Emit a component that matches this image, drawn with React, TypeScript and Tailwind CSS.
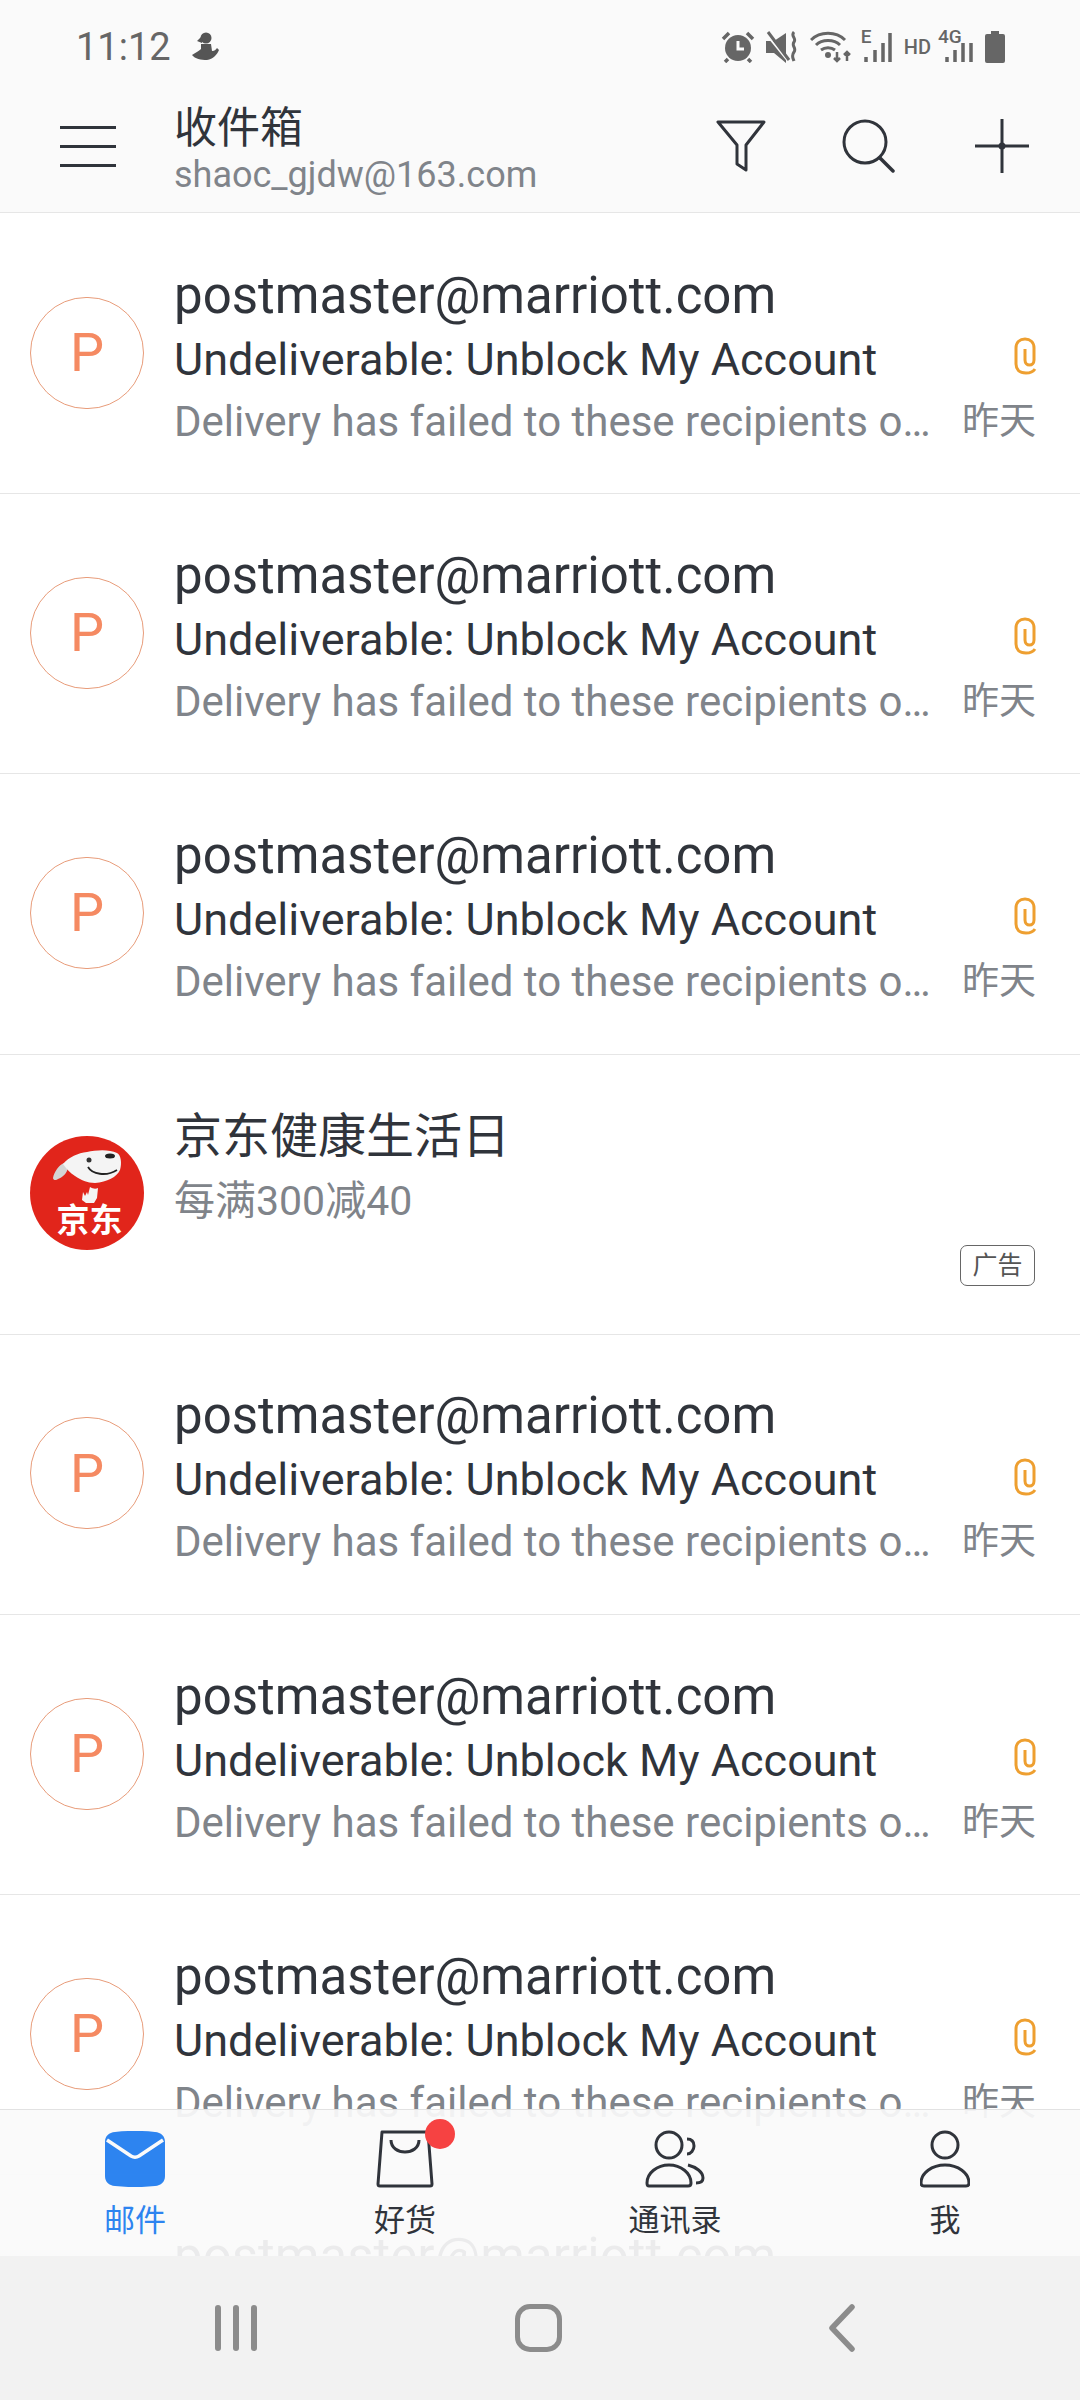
import React from 'react';

const FONT = "font-[Roboto,'Noto_Sans_CJK_SC',sans-serif]";

function StatusIcons() {
  return (
    <div className="flex items-center text-[#666666]">
      <svg width="34" height="32" viewBox="0 0 34 32">
        <circle cx="17" cy="17" r="13" fill="#666666" />
        <path d="M17 10v8h6" fill="none" stroke="#fafafa" strokeWidth="3" />
        <path d="M2 8l6-6M32 8l-6-6M7 28l-3 3M27 28l3 3" stroke="#666666" strokeWidth="3.500" fill="none" />
      </svg>
      <svg width="32" height="32" viewBox="0 0 32 32" className="ml-[11px]">
        <path d="M0 10h8l12-8v30L8 22H0z" fill="#666666" />
        <path d="M0 3l22 27" stroke="#fafafa" strokeWidth="2" />
        <path d="M2 1l21 28" stroke="#666666" strokeWidth="3" />
        <path d="M28 1c-4 4 3 6 0 10s3 6 0 10-1 6 0 9" fill="none" stroke="#666666" strokeWidth="3" />
      </svg>
      <svg width="42" height="32" viewBox="0 0 42 32" className="ml-[12px]">
        <path d="M1 9c9-9 25-9 34 0M6 14c6-6 18-6 24 0M11 19c4-3 10-3 14 0" fill="none" stroke="#666666" strokeWidth="3" />
        <circle cx="18" cy="24" r="3" fill="#666666" />
        <path d="M27 21v9M24 27l3 3 3-3M37 30v-9M34 24l3-3 3 3" fill="none" stroke="#666666" strokeWidth="2.500" />
      </svg>
      <div className="relative ml-[9px] h-[32px] w-[32px]">
        <span className="absolute left-0 top-[-3px] text-[19px] font-medium leading-[18px]">E</span>
        <svg width="32" height="32" viewBox="0 0 32 32" className="absolute inset-0">
          <path d="M5 26v5M14 19v12M22 12v19M29 2v29" stroke="#666666" strokeWidth="3.500" fill="none" />
        </svg>
      </div>
      <span className="ml-[11px] text-[20px] font-medium leading-none">HD</span>
      <div className="relative ml-[7px] h-[32px] w-[36px]">
        <span className="absolute left-0 top-[-3px] text-[19px] font-medium leading-[18px]">4G</span>
        <svg width="36" height="32" viewBox="0 0 36 32" className="absolute inset-0">
          <path d="M9 26v5M17 19v12M25 12v19M33 12v19" stroke="#666666" strokeWidth="3.500" fill="none" />
        </svg>
      </div>
      <svg width="20" height="32" viewBox="0 0 20 32" className="ml-[11px]">
        <path d="M6 0h8v3h4a2 2 0 0 1 2 2v25a2 2 0 0 1-2 2H2a2 2 0 0 1-2-2V5a2 2 0 0 1 2-2h4z" fill="#666666" />
      </svg>
    </div>
  );
}

function Header() {
  return (
    <div className="shrink-0 border-b border-[#e6e6e6] bg-[#fafafa]">
      <div className="flex h-[94px] items-center justify-between pl-[76px] pr-[75px]">
        <div className="flex items-center">
          <span className="text-[38px] leading-none text-[#666666]">11:12</span>
          <svg width="28" height="30" viewBox="0 0 28 30" className="ml-[20px]">
            <circle cx="15" cy="6" r="5.500" fill="#555555" />
            <path d="M12 3L6 9l5 2zM10 12h10l1 7c3 0 4-2 5-3l2 2c-2 5-6 9-12 10-6 0-12-1-15-5 3-2 7-4 9-6z" fill="#555555" />
          </svg>
        </div>
        <StatusIcons />
      </div>
      <div className="flex h-[118px] items-center pb-[14px] pl-[60px] pr-[51px]">
        <div className="flex w-[56px] flex-col gap-[16px]">
          <div className="h-[3px] bg-[#30343b]" />
          <div className="h-[3px] bg-[#30343b]" />
          <div className="h-[3px] bg-[#30343b]" />
        </div>
        <div className="ml-[58px] flex-1 pt-[7px]">
          <div className="text-[43px] leading-[50px] text-[#30343b]">收件箱</div>
          <div className="mt-[1px] text-[36px] leading-[42px] text-[#80848a]">shaoc_gjdw@163.com</div>
        </div>
        <svg width="50" height="52" viewBox="0 0 50 52">
          <path d="M2 2h46L30 25v25l-9-6V25z" fill="none" stroke="#30343b" strokeWidth="3" strokeLinejoin="round" />
        </svg>
        <svg width="54" height="54" viewBox="0 0 54 54" className="ml-[76px]">
          <circle cx="23" cy="23" r="21" fill="none" stroke="#30343b" strokeWidth="3" />
          <path d="M38 39l13 13" stroke="#30343b" strokeWidth="3.500" strokeLinecap="round" />
        </svg>
        <svg width="54" height="54" viewBox="0 0 54 54" className="ml-[79px]">
          <path d="M27 0v54M0 27h54" stroke="#30343b" strokeWidth="3" />
          <circle cx="27" cy="27" r="3.500" fill="#30343b" />
        </svg>
      </div>
    </div>
  );
}

function MailRow() {
  return (
    <div className="flex h-[280.2px] shrink-0 items-center border-b border-[#e6e6e6] bg-white pl-[30px] pr-[44px]">
      <div className="mb-[2px] flex h-[112px] w-[114px] shrink-0 items-center justify-center rounded-full border border-[#e89c7a] text-[54px] font-normal text-[#f58a62]">
        P
      </div>
      <div className="ml-[30px] min-w-0 flex-1 pt-[8px]">
        <div className="text-[51px] leading-[66px] text-[#30343b]">postmaster@marriott.com</div>
        <div className="flex items-center justify-between">
          <span className="text-[45px] leading-[62px] text-[#30343b]">Undeliverable: Unblock My Account</span>
          <svg width="24" height="38" viewBox="0 0 24 38" className="mb-[7px] mr-[-1px]">
            <path
              d="M22 32c-2 3-5 4-9 4-7 0-10-4-10-9V11c0-6 4-9 9-9s9 3 9 9v12c0 3-2 5-4.500 5S12 26 12 23V12"
              fill="none"
              stroke="#ee9f30"
              strokeWidth="3"
            />
          </svg>
        </div>
        <div className="flex items-center justify-between">
          <span className="w-[762px] truncate text-[42px] leading-[62px] text-[#80848a]">
            Delivery has failed to these recipients or groups
          </span>
          <span className="text-[37px] leading-[62px] text-[#80848a]">昨天</span>
        </div>
      </div>
    </div>
  );
}

function JdLogo() {
  return (
    <svg width="114" height="114" viewBox="0 0 114 114" className="mb-[2px] shrink-0">
      <circle cx="57" cy="57" r="57" fill="#e1251b" />
      <path d="M34 27c-5 2-10 9-11 15 0 2 3 3 5 1 5-2 9-6 10-11z" fill="#d4d4d4" />
      <path d="M33 28c6-7 15-11 24-12 9-2 22-3 30 1 4 2 5 10 3 17-3 7-13 12-25 13-8 0-14-3-20-7-5-3-9-8-12-12z" fill="#f4f4f4" />
      <circle cx="59" cy="24" r="2.500" fill="#333333" />
      <ellipse cx="80" cy="20" rx="5" ry="2.500" fill="#222222" />
      <path d="M58 31c4 7 18 10 29 3" fill="none" stroke="#222222" strokeWidth="1.800" />
      <path d="M60 51c3 2 6 2 8 1l-1 10-3 5h-8l-4-3 1-8 2 4 2-4 1 3z" fill="#f4f4f4" />
      <text x="59.500" y="96" textAnchor="middle" fontSize="33" fontWeight="700" fill="#ffffff" fontFamily="'Noto Sans CJK SC', sans-serif">
        京东
      </text>
    </svg>
  );
}

function AdRow() {
  return (
    <div className="flex h-[280.2px] shrink-0 items-center border-b border-[#e6e6e6] bg-white pl-[30px] pr-[45px]">
      <JdLogo />
      <div className="ml-[30px] flex-1 self-start pt-[50px]">
        <div className="text-[48px] leading-[64px] text-[#30343b]">京东健康生活日</div>
        <div className="mt-[1px] text-[41px] leading-[62px] text-[#80848a]">每满300减40</div>
        <div className="mt-[13px] flex justify-end">
          <span className="flex h-[41px] w-[75px] items-center justify-center rounded-[7px] border border-[#666666] text-[25px] leading-none text-[#555555]">
            广告
          </span>
        </div>
      </div>
    </div>
  );
}

function MailIcon() {
  return (
    <svg width="60" height="56" viewBox="0 0 60 56">
      <path d="M10 1c13-1.500 27-1.500 40 0 6 .500 10 4 10 10v34c0 6-4 9.500-10 10-13 1.500-27 1.500-40 0-6-.500-10-4-10-10V11C0 5 4 1.500 10 1z" fill="#2d84f0" />
      <path d="M2 9l24 16c2.500 1.500 5.500 1.500 8 0L58 9" fill="none" stroke="#fafafa" strokeWidth="3.500" />
    </svg>
  );
}

function BagIcon() {
  return (
    <svg width="58" height="58" viewBox="0 0 58 58">
      <path d="M6 2h46l4 52a2 2 0 0 1-2 2H4a2 2 0 0 1-2-2z" fill="none" stroke="#30343b" strokeWidth="3" strokeLinejoin="round" />
      <path d="M15 10c0 16 28 16 28 0" fill="none" stroke="#30343b" strokeWidth="3" />
    </svg>
  );
}

function ContactsIcon() {
  return (
    <svg width="60" height="58" viewBox="0 0 60 58" fill="none" stroke="#30343b" strokeWidth="3">
      <circle cx="24" cy="15" r="13" />
      <path d="M4 56h39c2 0 3-1 3-3 0-10-10-18-22-18S2 43 2 53c0 2 1 3 2 3z" />
      <path d="M42 9c5 0 7 3 7 7s-3 8-7 8M43 35c8 2 15 7 15 13 0 3-2 5-7 5" />
    </svg>
  );
}

function PersonIcon() {
  return (
    <svg width="50" height="58" viewBox="0 0 50 58" fill="none" stroke="#30343b" strokeWidth="3">
      <circle cx="25" cy="15" r="13" />
      <path d="M4 56h42c2 0 3-1 3-3 0-10-11-18-24-18S1 43 1 53c0 2 1 3 3 3z" />
    </svg>
  );
}

function TabBar() {
  return (
    <div className="absolute bottom-[144px] left-0 right-0 grid h-[147px] grid-cols-4 border-t border-[#e2e2e2] bg-[#fafafa]/93">
      <div className="flex flex-col items-center pt-[20px]">
        <div className="flex h-[58px] items-center"><MailIcon /></div>
        <span className="mt-[13px] text-[31px] leading-[40px] text-[#2d84f0]">邮件</span>
      </div>
      <div className="flex flex-col items-center pt-[20px]">
        <div className="relative flex h-[58px] items-center">
          <BagIcon />
          <span className="absolute right-[-21px] top-[-11px] h-[30px] w-[30px] rounded-full bg-[#f64242]" />
        </div>
        <span className="mt-[13px] text-[31px] leading-[40px] text-[#30343b]">好货</span>
      </div>
      <div className="flex flex-col items-center pt-[20px]">
        <div className="flex h-[58px] items-center"><ContactsIcon /></div>
        <span className="mt-[13px] text-[31px] leading-[40px] text-[#30343b]">通讯录</span>
      </div>
      <div className="flex flex-col items-center pt-[20px]">
        <div className="flex h-[58px] items-center"><PersonIcon /></div>
        <span className="mt-[13px] text-[31px] leading-[40px] text-[#30343b]">我</span>
      </div>
    </div>
  );
}

function NavBar() {
  return (
    <div className="absolute bottom-0 left-0 right-0 grid h-[144px] grid-cols-3 items-center bg-[#f2f2f2] px-[84px]">
      <div className="flex justify-center gap-[12px]">
        <div className="h-[46px] w-[6px] rounded-full bg-[#8c8c8c]" />
        <div className="h-[46px] w-[6px] rounded-full bg-[#8c8c8c]" />
        <div className="h-[46px] w-[6px] rounded-full bg-[#8c8c8c]" />
      </div>
      <div className="flex justify-center pr-[4px]">
        <div className="h-[48px] w-[47px] rounded-[15px] border-[5px] border-[#8c8c8c]" />
      </div>
      <div className="flex justify-center pr-[4px]">
        <svg width="26" height="48" viewBox="0 0 26 48">
          <path d="M23 3L3 24l20 21" fill="none" stroke="#8c8c8c" strokeWidth="5.500" strokeLinecap="round" strokeLinejoin="round" />
        </svg>
      </div>
    </div>
  );
}

export default function App() {
  return (
    <div className={`relative flex h-[2400px] w-[1080px] flex-col overflow-hidden bg-white ${FONT}`}>
      <Header />
      <div className="flex flex-col pt-[1px]">
        <MailRow />
        <MailRow />
        <MailRow />
        <AdRow />
        <MailRow />
        <MailRow />
        <MailRow />
        <MailRow />
      </div>
      <TabBar />
      <NavBar />
    </div>
  );
}
